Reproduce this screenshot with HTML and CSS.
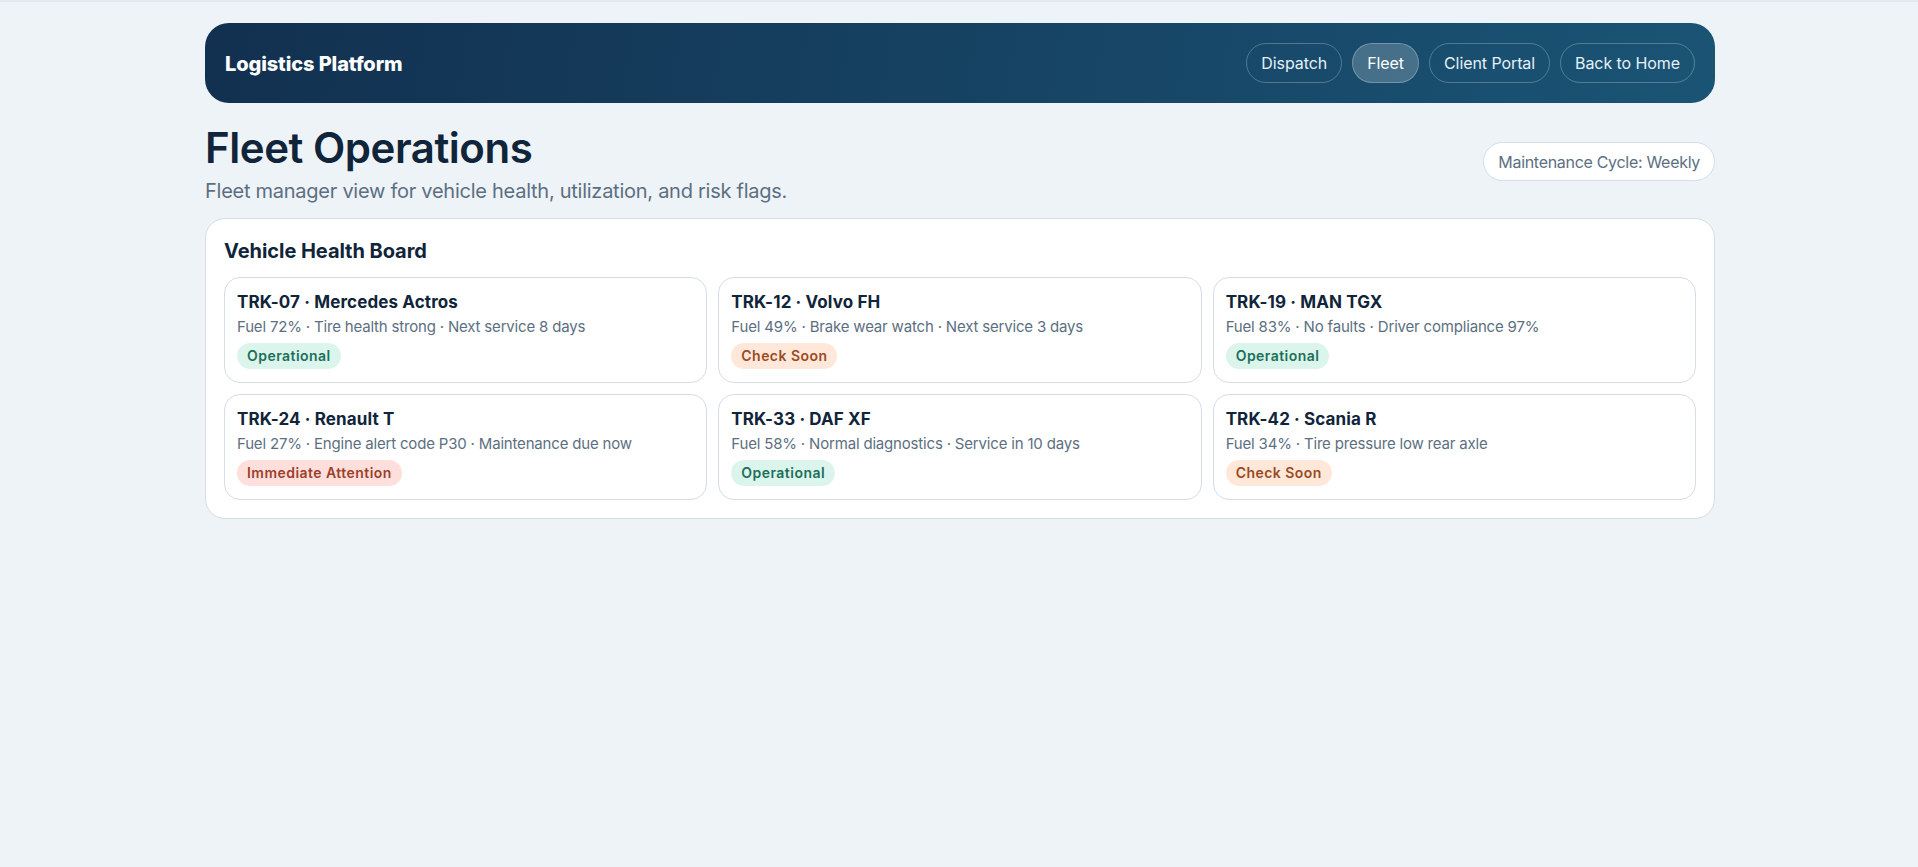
FILE: index.html
```html
<!DOCTYPE html>
<html lang="en">
<head>
<meta charset="utf-8">
<title>Fleet Operations</title>
<link rel="stylesheet" href="styles.css">
</head>
<body>
<div class="page">
  <header class="topbar">
    <div class="brand">Logistics Platform</div>
    <nav class="nav">
      <a class="pill">Dispatch</a>
      <a class="pill active">Fleet</a>
      <a class="pill">Client Portal</a>
      <a class="pill">Back to Home</a>
    </nav>
  </header>
  <section class="intro">
    <div>
      <h1>Fleet Operations</h1>
      <p>Fleet manager view for vehicle health, utilization, and risk flags.</p>
    </div>
    <span class="cycle">Maintenance Cycle: Weekly</span>
  </section>
  <section class="board">
    <h2>Vehicle Health Board</h2>
    <div class="grid">
      <article class="card"><h3>TRK-07 · Mercedes Actros</h3><p>Fuel 72% · Tire health strong · Next service 8 days</p><span class="badge ok">Operational</span></article>
      <article class="card"><h3>TRK-12 · Volvo FH</h3><p>Fuel 49% · Brake wear watch · Next service 3 days</p><span class="badge warn">Check Soon</span></article>
      <article class="card"><h3>TRK-19 · MAN TGX</h3><p>Fuel 83% · No faults · Driver compliance 97%</p><span class="badge ok">Operational</span></article>
      <article class="card"><h3>TRK-24 · Renault T</h3><p>Fuel 27% · Engine alert code P30 · Maintenance due now</p><span class="badge bad">Immediate Attention</span></article>
      <article class="card"><h3>TRK-33 · DAF XF</h3><p>Fuel 58% · Normal diagnostics · Service in 10 days</p><span class="badge ok">Operational</span></article>
      <article class="card"><h3>TRK-42 · Scania R</h3><p>Fuel 34% · Tire pressure low rear axle</p><span class="badge warn">Check Soon</span></article>
    </div>
  </section>
</div>
</body>
</html>
```
FILE: styles.css
```css
* { box-sizing: border-box; }
html, body { margin: 0; height: 100%; }
body {
  background: #eef3f8;
  border-top: 2px solid #e3e8ee;
  font-family: "Inter", "Liberation Sans", sans-serif;
  color: #10243a;
}
.page { width: 1510px; margin-left: 205px; padding-top: 21px; }
.topbar {
  height: 80px;
  padding: 1px 20px 0;
  border-radius: 24px;
  background: linear-gradient(100deg, #12304f, #1a5475);
  display: flex;
  align-items: center;
  justify-content: space-between;
}
.brand { color: #fff; font-size: 20px; font-weight: 800; letter-spacing: -0.1px; padding-top: 1px; }
.nav { display: flex; gap: 10px; margin-top: -1px; }
.pill {
  height: 40px;
  padding: 0 14px;
  display: flex;
  align-items: center;
  border: 1px solid rgba(255,255,255,.25);
  border-radius: 20px;
  color: #e6f0f7;
  font-size: 16px;
  letter-spacing: -0.08px;
}
.pill.active { background: rgba(255,255,255,.2); color: #fff; }
.intro {
  display: flex;
  justify-content: space-between;
  align-items: center;
  margin: 19px 0 14px;
}
h1 { margin: 0; font-size: 42px; line-height: 52px; font-weight: 600; letter-spacing: -0.46px; }
.intro p { margin: 4px 0 0; font-size: 20px; line-height: 26px; color: #5c6f82; letter-spacing: -0.26px; }
.cycle {
  height: 39px;
  margin-bottom: 3px;
  padding: 0 14px;
  display: flex;
  align-items: center;
  background: #fff;
  border: 1px solid #d4dde8;
  border-radius: 20px;
  color: #5c6f82;
  font-size: 16px;
  letter-spacing: -0.3px;
}
.board {
  background: #fff;
  border: 1px solid #d4dde8;
  border-radius: 20px;
  padding: 18px;
}
h2 { margin: 1px 0 13px; font-size: 20px; line-height: 26px; font-weight: 650; letter-spacing: -0.05px; }
.grid { display: grid; grid-template-columns: repeat(3, 1fr); gap: 11px; }
.card {
  height: 106px;
  padding: 12px 12px;
  border: 1px solid #d4dde8;
  border-radius: 16px;
}
h3 { margin: 0; font-size: 17px; line-height: 24px; font-weight: 650; letter-spacing: 0.12px; }
.card p { margin: 1px 0 4px; font-size: 15px; line-height: 24px; color: #5c6f82; letter-spacing: -0.18px; }
.badge {
  display: inline-block;
  height: 26px;
  padding: 0 10px;
  border-radius: 13px;
  font-size: 14px;
  line-height: 26px;
  font-weight: 600;
  letter-spacing: 0.46px;
}
.ok { background: #dcf5ec; color: #1d6f5a; }
.warn { background: #ffe8d9; color: #9a4a23; }
.bad { background: #ffdfdc; color: #9c3f2a; }
```
